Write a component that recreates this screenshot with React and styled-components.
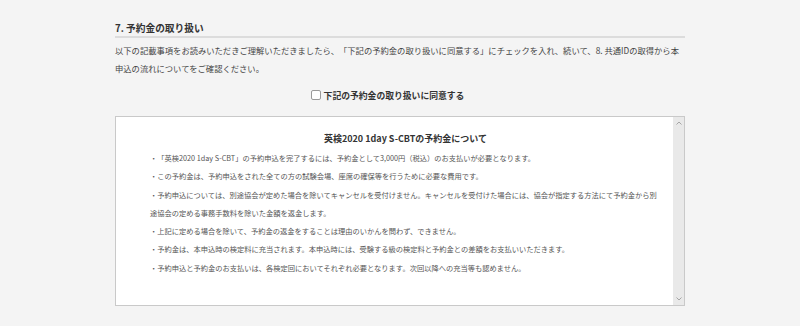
import styled, { createGlobalStyle } from "styled-components";

const GlobalStyle = createGlobalStyle`
  html, body {
    margin: 0;
    padding: 0;
    background: #f4f4f4;
  }
  body {
    font-family: "Noto Sans CJK JP", "Noto Sans", sans-serif;
    color: #444;
    text-spacing-trim: space-all;
  }
`;

const Section = styled.section`
  width: 570px;
  margin: 0 auto;
  padding-top: 22px;
`;

const Heading = styled.h2`
  margin: 0;
  font-size: 9.7px;
  line-height: 12px;
  font-weight: 700;
  color: #333;
  padding-bottom: 2px;
  border-bottom: 2px solid #dcdcdc;
`;

const Lead = styled.p`
  margin: 3px 0 0;
  font-size: 8.3px;
  line-height: 18px;
  color: #444;
`;

const AgreeRow = styled.label`
  display: flex;
  align-items: center;
  justify-content: center;
  gap: 3px;
  margin-top: 9px;
  padding-right: 25px;
  height: 18px;
  font-size: 8.8px;
  font-weight: 700;
  color: #333;
  cursor: pointer;
`;

const CheckBox = styled.span`
  width: 8px;
  height: 8px;
  border: 1px solid #9a9a9a;
  border-radius: 2px;
  background: #fff;
`;

const NoticeBox = styled.div`
  display: flex;
  margin-top: 12px;
  height: 188px;
  border: 1px solid #c9c9c9;
  background: #fff;
`;

const NoticeBody = styled.div`
  flex: 1;
  overflow: hidden;
  padding: 13px 12px 0 34px;
`;

const NoticeTitle = styled.h3`
  margin: 0 0 1px;
  text-align: center;
  font-size: 9px;
  line-height: 18px;
  font-weight: 700;
  color: #333;
`;

const NoticeList = styled.ul`
  list-style: none;
  margin: 0;
  padding: 0;
`;

const NoticeItem = styled.li`
  font-size: 7.25px;
  line-height: 18.3px;
  color: #555;
`;

const ScrollTrack = styled.div`
  width: 11px;
  display: flex;
  flex-direction: column;
  justify-content: space-between;
  align-items: center;
  background: #e9e9e9;
  padding: 4px 0;
`;

const Arrow = ({ down }) => (
  <svg width="6" height="4" viewBox="0 0 6 4">
    <polyline
      points={down ? "0.5,0.5 3,3 5.5,0.5" : "0.5,3.5 3,1 5.5,3.5"}
      fill="none"
      stroke="#a5a5a5"
      strokeWidth="1"
    />
  </svg>
);

const items = [
  "・「英検2020 1day S-CBT」の予約申込を完了するには、予約金として3,000円（税込）のお支払いが必要となります。",
  "・この予約金は、予約申込をされた全ての方の試験会場、座席の確保等を行うために必要な費用です。",
  "・予約申込については、別途協会が定めた場合を除いてキャンセルを受付けません。キャンセルを受付けた場合には、協会が指定する方法にて予約金から別途協会の定める事務手数料を除いた金額を返金します。",
  "・上記に定める場合を除いて、予約金の返金をすることは理由のいかんを問わず、できません。",
  "・予約金は、本申込時の検定料に充当されます。本申込時には、受験する級の検定料と予約金との差額をお支払いいただきます。",
  "・予約申込と予約金のお支払いは、各検定回においてそれぞれ必要となります。次回以降への充当等も認めません。",
];

export default function App() {
  return (
    <>
      <GlobalStyle />
      <Section>
        <Heading>7. 予約金の取り扱い</Heading>
        <Lead>
          以下の記載事項をお読みいただきご理解いただきましたら、「下記の予約金の取り扱いに同意する」にチェックを入れ、続いて、8. 共通IDの取得から本申込の流れについてをご確認ください。
        </Lead>
        <AgreeRow>
          <CheckBox />
          下記の予約金の取り扱いに同意する
        </AgreeRow>
        <NoticeBox>
          <NoticeBody>
            <NoticeTitle>英検2020 1day S-CBTの予約金について</NoticeTitle>
            <NoticeList>
              {items.map((text) => (
                <NoticeItem key={text}>{text}</NoticeItem>
              ))}
            </NoticeList>
          </NoticeBody>
          <ScrollTrack>
            <Arrow />
            <Arrow down />
          </ScrollTrack>
        </NoticeBox>
      </Section>
    </>
  );
}
